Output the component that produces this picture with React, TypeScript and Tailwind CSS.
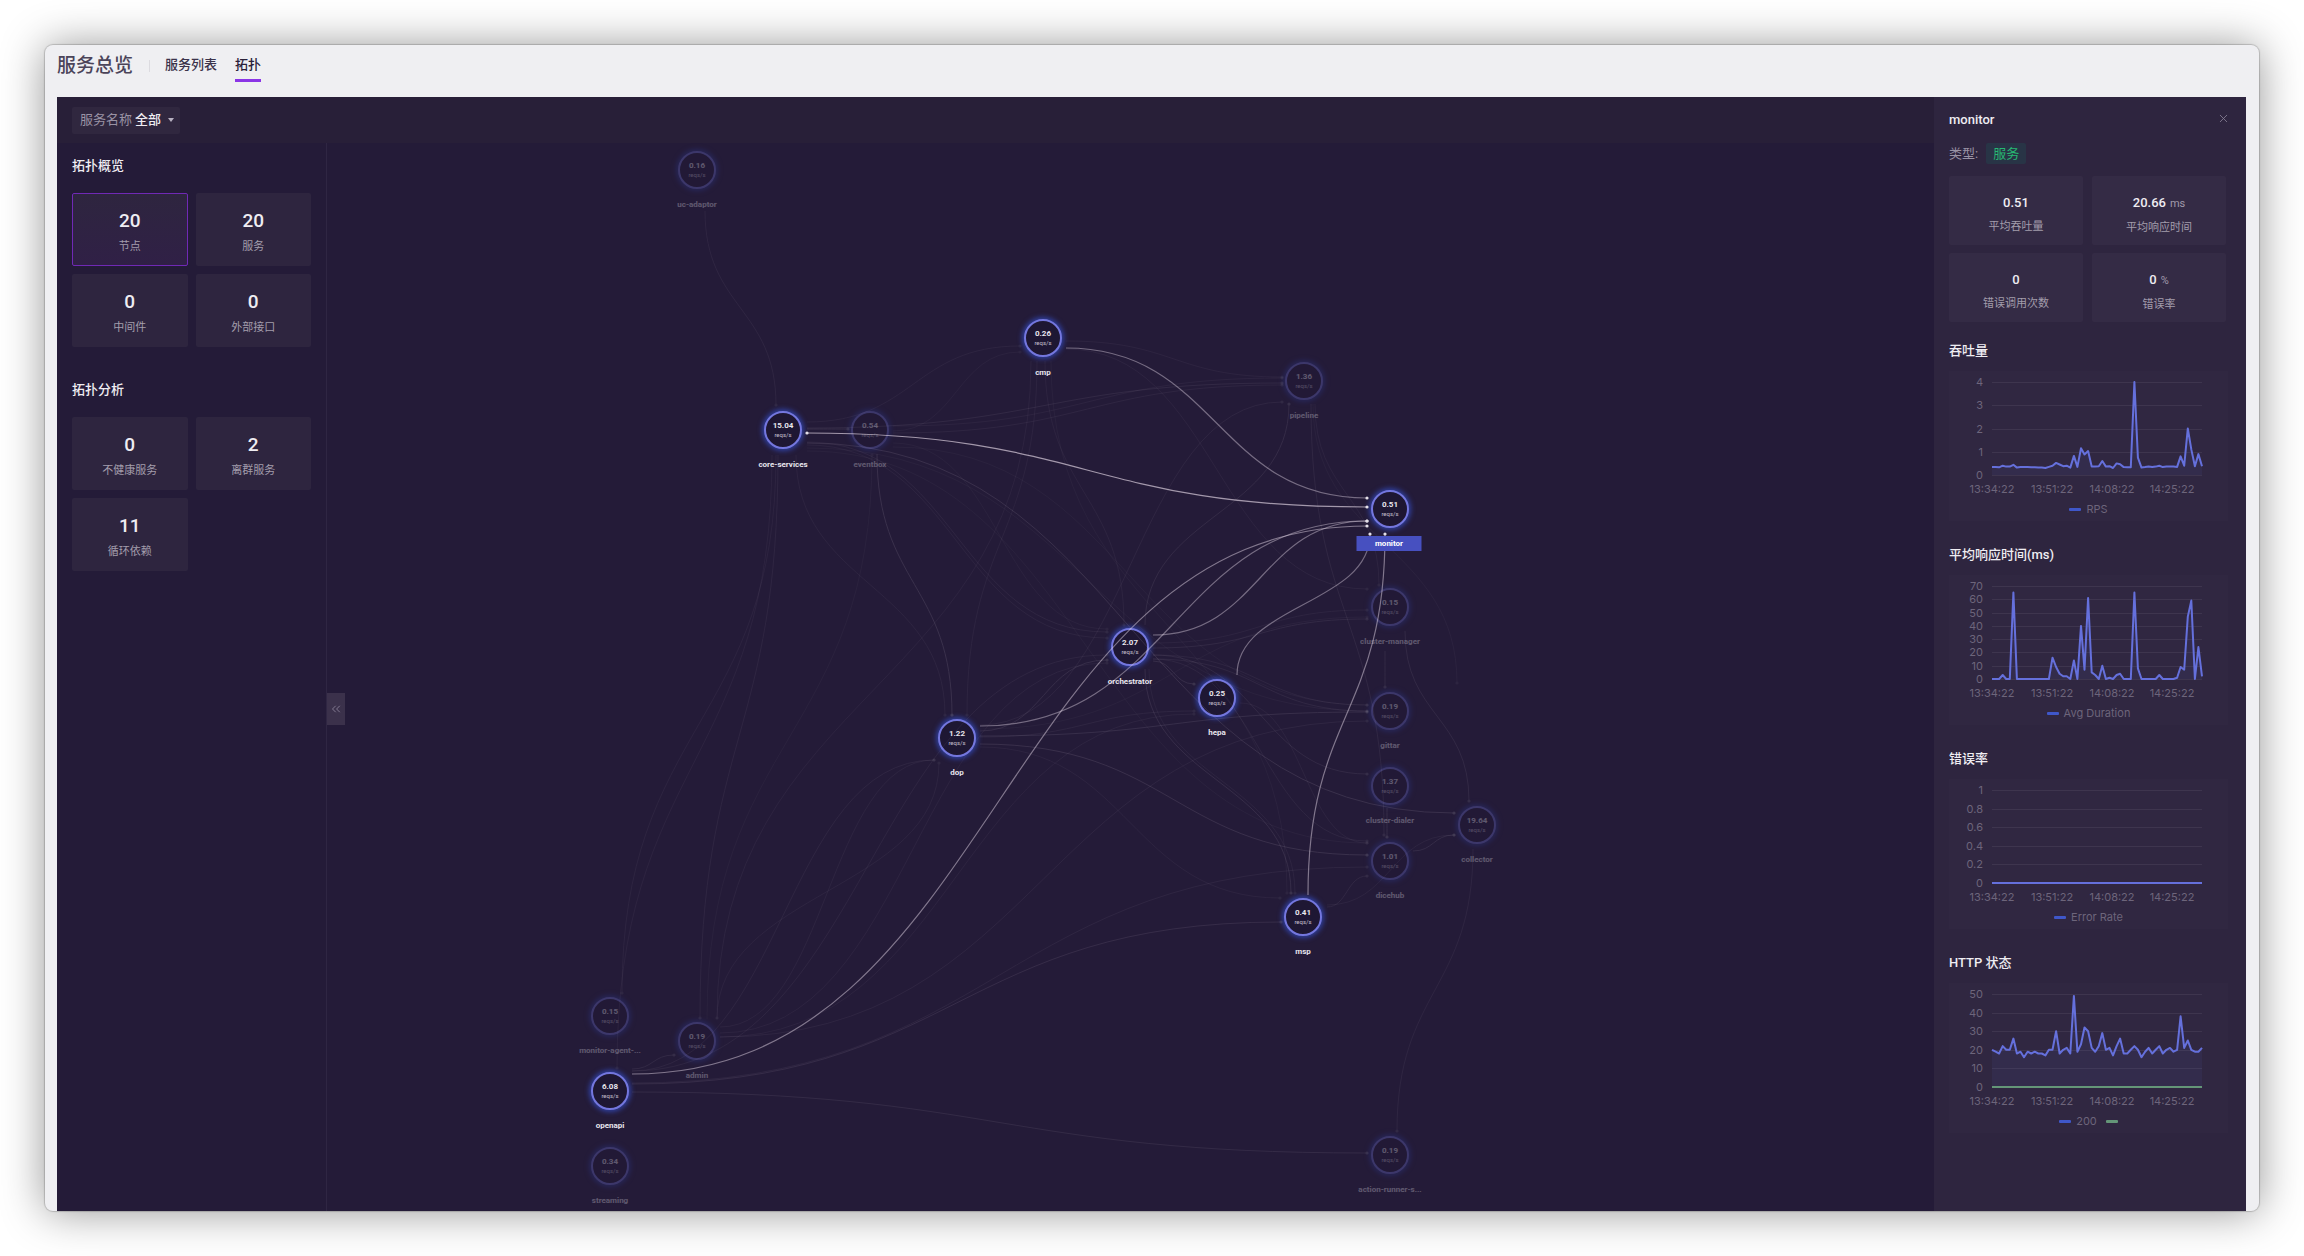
import React from "react";
import { ChevronsLeft, X } from "lucide-react";

type Stat = { value: string; label: string; unit?: string; selected?: boolean };

const overview: Stat[] = [
  { value: "20", label: "节点", selected: true },
  { value: "20", label: "服务" },
  { value: "0", label: "中间件" },
  { value: "0", label: "外部接口" },
];

const analysis: Stat[] = [
  { value: "0", label: "不健康服务" },
  { value: "2", label: "离群服务" },
  { value: "11", label: "循环依赖" },
];

const metrics: Stat[] = [
  { value: "0.51", label: "平均吞吐量" },
  { value: "20.66", unit: "ms", label: "平均响应时间" },
  { value: "0", label: "错误调用次数" },
  { value: "0", unit: "%", label: "错误率" },
];

type ServiceNode = { name: string; rate: string; x: number; y: number; active?: boolean; current?: boolean };

const nodes: ServiceNode[] = [
  { name: "uc-adaptor", rate: "0.16", x: 370, y: 27 },
  { name: "cmp", rate: "0.26", x: 716, y: 195, active: true },
  { name: "pipeline", rate: "1.36", x: 977, y: 238 },
  { name: "core-services", rate: "15.04", x: 456, y: 287, active: true },
  { name: "eventbox", rate: "0.54", x: 543, y: 287 },
  { name: "monitor", rate: "0.51", x: 1063, y: 366, active: true, current: true },
  { name: "cluster-manager", rate: "0.15", x: 1063, y: 464 },
  { name: "orchestrator", rate: "2.07", x: 803, y: 504, active: true },
  { name: "hepa", rate: "0.25", x: 890, y: 555, active: true },
  { name: "gittar", rate: "0.19", x: 1063, y: 568 },
  { name: "dop", rate: "1.22", x: 630, y: 595, active: true },
  { name: "cluster-dialer", rate: "1.37", x: 1063, y: 643 },
  { name: "collector", rate: "19.64", x: 1150, y: 682 },
  { name: "dicehub", rate: "1.01", x: 1063, y: 718 },
  { name: "msp", rate: "0.41", x: 976, y: 774, active: true },
  { name: "monitor-agent-...", rate: "0.15", x: 283, y: 873 },
  { name: "admin", rate: "0.19", x: 370, y: 898 },
  { name: "openapi", rate: "6.08", x: 283, y: 948, active: true },
  { name: "action-runner-s...", rate: "0.19", x: 1063, y: 1012 },
  { name: "streaming", rate: "0.34", x: 283, y: 1023 },
];

// [x1, y1, x2, y2, direction, strength]
type Edge = [number, number, number, number, "h" | "v", number];

const faintEdges: Edge[] = [
  [378, 68, 449, 262, "v", 0.06],
  [480, 286, 521, 286, "h", 0.1],
  [480, 279, 693, 203, "h", 0.05],
  [566, 288, 693, 209, "h", 0.04],
  [480, 285, 955, 240, "h", 0.08],
  [566, 283, 955, 235, "h", 0.05],
  [739, 198, 955, 234, "h", 0.05],
  [566, 290, 955, 242, "h", 0.06],
  [653, 582, 955, 259, "h", 0.06],
  [480, 299, 780, 489, "h", 0.06],
  [480, 302, 780, 495, "h", 0.05],
  [480, 300, 1127, 670, "h", 0.12],
  [566, 300, 780, 486, "h", 0.04],
  [480, 305, 1040, 568, "h", 0.04],
  [480, 308, 1040, 700, "h", 0.04],
  [566, 304, 1040, 562, "h", 0.04],
  [739, 206, 1040, 446, "h", 0.05],
  [550, 311, 625, 572, "v", 0.12],
  [469, 312, 618, 572, "v", 0.05],
  [451, 312, 373, 875, "v", 0.06],
  [449, 312, 295, 850, "v", 0.05],
  [445, 312, 290, 925, "v", 0.05],
  [818, 482, 962, 261, "v", 0.09],
  [710, 218, 640, 572, "v", 0.05],
  [704, 218, 390, 875, "v", 0.05],
  [718, 218, 797, 482, "v", 0.05],
  [724, 218, 960, 750, "v", 0.04],
  [984, 261, 1057, 692, "v", 0.07],
  [988, 261, 1052, 442, "v", 0.05],
  [986, 261, 1130, 540, "v", 0.04],
  [818, 526, 964, 750, "v", 0.1],
  [822, 526, 968, 750, "v", 0.05],
  [826, 500, 1040, 467, "h", 0.05],
  [826, 505, 1040, 476, "h", 0.08],
  [826, 512, 1040, 562, "h", 0.06],
  [826, 516, 1040, 568, "h", 0.07],
  [826, 518, 867, 541, "h", 0.1],
  [826, 512, 1040, 631, "h", 0.08],
  [826, 516, 1040, 698, "h", 0.06],
  [913, 560, 1040, 700, "h", 0.05],
  [653, 588, 780, 517, "h", 0.1],
  [653, 593, 1040, 569, "h", 0.11],
  [653, 586, 1040, 474, "h", 0.04],
  [653, 594, 867, 568, "h", 0.06],
  [653, 601, 1040, 712, "h", 0.12],
  [653, 604, 953, 755, "h", 0.05],
  [305, 941, 954, 779, "h", 0.1],
  [305, 949, 1040, 1010, "h", 0.09],
  [305, 940, 1040, 724, "h", 0.06],
  [305, 928, 607, 617, "h", 0.06],
  [305, 928, 780, 512, "h", 0.06],
  [305, 926, 347, 912, "h", 0.08],
  [393, 884, 607, 617, "h", 0.05],
  [393, 894, 1040, 578, "h", 0.06],
  [393, 890, 780, 520, "h", 0.05],
  [393, 894, 867, 571, "h", 0.05],
  [390, 876, 612, 620, "v", 0.05],
  [380, 876, 545, 312, "v", 0.04],
  [1086, 708, 1127, 692, "h", 0.09],
  [1078, 488, 1142, 658, "v", 0.08],
  [1146, 706, 1070, 988, "v", 0.06],
  [1058, 508, 1058, 544, "v", 0.08],
  [1060, 665, 1060, 694, "v", 0.1],
  [1000, 764, 1040, 733, "h", 0.07],
  [1000, 762, 1127, 692, "h", 0.05],
];

const activeEdges: Edge[] = [
  [480, 290, 1040, 364, "h", 0.65],
  [739, 205, 1040, 355, "h", 0.42],
  [653, 583, 1040, 378, "h", 0.42],
  [305, 931, 1040, 383, "h", 0.48],
  [826, 492, 1040, 378, "h", 0.42],
  [910, 532, 1043, 391, "v", 0.42],
  [981, 752, 1058, 391, "v", 0.48],
];

function edgePath([x1, y1, x2, y2, direction]: Edge) {
  const mx = (x1 + x2) / 2;
  const my = (y1 + y2) / 2;
  return direction === "h"
    ? `M${x1} ${y1}C${mx} ${y1} ${mx} ${y2} ${x2} ${y2}`
    : `M${x1} ${y1}C${x1} ${my} ${x2} ${my} ${x2} ${y2}`;
}

function StatCard({ stat }: { stat: Stat }) {
  return (
    <button
      type="button"
      className={
        stat.selected
          ? "flex h-[73px] flex-col items-center rounded-[2px] border border-[#7029b5] bg-linear-to-b from-[#2e253f] to-[#302046] pt-[13px]"
          : "flex h-[73px] flex-col items-center rounded-[2px] border border-transparent bg-[#2e253f] pt-[13px]"
      }
    >
      <span className="text-[19px] leading-7 font-medium text-[#efedf2]">{stat.value}</span>
      <span className="text-[11px] leading-6 text-[#a39dac]">{stat.label}</span>
    </button>
  );
}

function MetricCard({ stat }: { stat: Stat }) {
  return (
    <div className="flex h-[69px] flex-col items-center rounded-[2px] bg-[#342b45] pt-[15px]">
      <div className="text-[13px] leading-6 font-medium text-[#efedf2]">
        {stat.value}
        {stat.unit && <span className="ml-1 text-[11px] font-normal text-[#a09aab]">{stat.unit}</span>}
      </div>
      <div className="text-[11px] leading-6 text-[#a39dac]">{stat.label}</div>
    </div>
  );
}

function NodeView({ node }: { node: ServiceNode }) {
  return (
    <div
      className={
        node.active
          ? "absolute flex w-24 -translate-x-1/2 flex-col items-center"
          : "absolute flex w-24 -translate-x-1/2 flex-col items-center opacity-30"
      }
      style={{ left: node.x, top: node.y - 19 }}
    >
      <div className="flex size-[38px] flex-col items-center justify-center rounded-full border-2 border-[#7477de] bg-[#1e1733] shadow-[0_0_5px_2px_#3040a0]">
        <span className="text-[8px] leading-[10px] font-bold text-[#e8e6ee]">{node.rate}</span>
        <span className="text-[6px] leading-2 text-[#c5c0d0]">reqs/s</span>
      </div>
      <span className="mt-2 h-[15px] text-[8px] leading-[15px] font-bold whitespace-nowrap text-[#e8e6ee]">
        {node.current ? "" : node.name}
      </span>
    </div>
  );
}

function Topology() {
  return (
    <section aria-label="拓扑" className="relative flex-1 overflow-hidden">
      {nodes.map((node) => (
        <NodeView key={node.name} node={node} />
      ))}
      <svg className="pointer-events-none absolute top-0 left-0" width="1607" height="1068" fill="none" aria-hidden="true">
        {faintEdges.map((edge, i) => (
          <g key={i} opacity={edge[5]}>
            <path d={edgePath(edge)} stroke="#d5c8d8" />
            <circle cx={edge[2]} cy={edge[3]} r="1.6" fill="#ffffff" />
          </g>
        ))}
        {activeEdges.map((edge, i) => (
          <g key={i}>
            <path d={edgePath(edge)} stroke="#e8dcea" strokeOpacity={edge[5]} strokeWidth="1.2" />
            <circle cx={edge[2]} cy={edge[3]} r="1.6" fill="#e4dfe8" />
          </g>
        ))}
        <circle cx="480" cy="290" r="1.6" fill="#e4dfe8" />
      </svg>
      <div className="absolute top-[393px] left-[1062px] flex h-[15px] w-[65px] -translate-x-1/2 items-center justify-center bg-[#4750c0] text-[8px] leading-[15px] font-bold text-white">
        monitor
      </div>
      <button
        type="button"
        aria-label="收起"
        className="absolute top-[550px] left-0 flex h-8 w-[18px] items-center justify-center bg-[#3b314b] text-[#8b829a]"
      >
        <ChevronsLeft size={14} strokeWidth={1.5} />
      </button>
    </section>
  );
}

type Series = { name: string; color: string; legend: string; data: number[] };
type ChartSpec = { title: string; ticks: string[]; max: number; series: Series[] };

const flat = Array.from({ length: 60 }, () => 0);

const charts: ChartSpec[] = [
  {
    title: "吞吐量",
    ticks: ["4", "3", "2", "1", "0"],
    max: 4,
    series: [
      {
        name: "RPS",
        color: "#6570dc",
        legend: "#3f57c9",
        data: [
          0.35, 0.35, 0.33, 0.4, 0.36, 0.36, 0.44, 0.32, 0.34, 0.34, 0.34, 0.33, 0.33, 0.32, 0.32, 0.3, 0.35, 0.4, 0.52, 0.45,
          0.38, 0.4, 0.32, 0.82, 0.35, 1.15, 0.88, 1.03, 0.37, 0.37, 0.38, 0.6, 0.36, 0.38, 0.3, 0.5, 0.46, 0.34, 0.33, 0.33,
          4, 0.75, 0.32, 0.34, 0.37, 0.34, 0.36, 0.4, 0.34, 0.36, 0.36, 0.36, 0.35, 0.8, 0.4, 2, 1.1, 0.38, 0.9, 0.38,
        ],
      },
    ],
  },
  {
    title: "平均响应时间(ms)",
    ticks: ["70", "60", "50", "40", "30", "20", "10", "0"],
    max: 70,
    series: [
      {
        name: "Avg Duration",
        color: "#6570dc",
        legend: "#3f57c9",
        data: [
          0, 0, 0, 3, 0, 0, 65, 0, 0, 0, 0, 0, 0, 0, 0, 0, 0, 16, 9, 4, 2, 2, 0, 14, 0, 40, 7, 61, 5, 3, 0, 10, 0, 1, 0, 3,
          4, 0, 0, 0, 65, 8, 0, 0, 0, 0, 0, 3, 0, 0, 0, 0, 1, 9, 7, 47, 59, 0, 24, 2,
        ],
      },
    ],
  },
  {
    title: "错误率",
    ticks: ["1", "0.8", "0.6", "0.4", "0.2", "0"],
    max: 1,
    series: [{ name: "Error Rate", color: "#6570dc", legend: "#3f57c9", data: flat }],
  },
  {
    title: "HTTP 状态",
    ticks: ["50", "40", "30", "20", "10", "0"],
    max: 50,
    series: [
      {
        name: "200",
        color: "#6570dc",
        legend: "#3f57c9",
        data: [
          20, 19, 18, 22, 20, 20, 26, 18, 19, 16, 19, 18, 19, 18, 18, 17, 20, 20, 30, 18, 20, 21, 18, 49, 19, 23, 32, 30,
          21, 19, 22, 29, 20, 21, 17, 22, 26, 18, 18, 20, 22, 20, 16, 19, 21, 18, 20, 22, 18, 20, 21, 19, 20, 38, 21, 25,
          20, 19, 19, 21,
        ],
      },
      { name: "", color: "#649678", legend: "#649678", data: flat },
    ],
  },
];

const times = ["13:34:22", "13:51:22", "14:08:22", "14:25:22"];

function Chart({ spec }: { spec: ChartSpec }) {
  const left = 43;
  const width = 210;
  const top = 11;
  const bottom = 104;
  const points = (data: number[]) =>
    data
      .map((v, i) => `${(left + (i * width) / 59).toFixed(1)},${(bottom - (v / spec.max) * (bottom - top)).toFixed(1)}`)
      .join(" ");

  return (
    <section className="mb-[22px]">
      <h3 className="mb-2 text-[13px] leading-6 font-medium text-[#efedf2]">{spec.title}</h3>
      <div className="relative h-[150px] w-[279px] bg-[#302741]">
        <svg width="277" height="150" className="font-['Inter',sans-serif] text-[11px]" role="img" aria-label={spec.title}>
          {spec.ticks.map((tick, i) => {
            const y = Math.round(top + (i * (bottom - top)) / (spec.ticks.length - 1));
            return (
              <g key={tick}>
                <line x1={left} x2={left + width} y1={y + 0.5} y2={y + 0.5} stroke="#3e354e" />
                <text x="34" y={y + 4} textAnchor="end" fill="#6d657b">
                  {tick}
                </text>
              </g>
            );
          })}
          {times.map((time, i) => (
            <text key={time} x={left + 60 * i} y="122" textAnchor="middle" fill="#6d657b">
              {time}
            </text>
          ))}
          {spec.series.map((s) => (
            <g key={s.name}>
              <polygon
                points={`${left},${bottom} ${points(s.data)} ${left + width},${bottom}`}
                fill={s.color}
                fillOpacity="0.07"
              />
              <polyline points={points(s.data)} fill="none" stroke={s.color} strokeWidth="2" strokeLinejoin="round" />
            </g>
          ))}
        </svg>
        <div className="absolute inset-x-0 top-[130px] flex justify-center gap-[9px] font-['Inter',sans-serif] text-[11px] leading-4 text-[#6d657b]">
          {spec.series.map((s) => (
            <span key={s.name} className="flex items-center gap-[5px]">
              <svg width="12" height="3" aria-hidden="true">
                <rect width="12" height="3" rx="1" fill={s.legend} />
              </svg>
              {s.name && <span>{s.name}</span>}
            </span>
          ))}
        </div>
      </div>
    </section>
  );
}

export default function App() {
  return (
    <div className="flex min-h-screen bg-white p-[45px] font-['Roboto','Noto_Sans_CJK_SC',sans-serif]">
      <div className="flex flex-1 flex-col overflow-hidden rounded-lg bg-[#efeff2] shadow-[0_0_1px_1px_rgba(0,0,0,0.18),0_1px_44px_rgba(0,0,0,0.42)]">
        <header className="flex h-[52px] items-start pt-[9px] pl-3">
          <h1 className="text-[19px] leading-6 font-medium text-[#4b4459]">服务总览</h1>
          <span className="mt-[6px] ml-4 h-3 w-px bg-[#dcdbe0]" />
          <nav className="-mt-px ml-[15px] flex gap-[18px] text-[13px] leading-6 font-medium">
            <a href="#list" className="border-b-[3px] border-transparent pb-0.5 text-[#3b334b]">
              服务列表
            </a>
            <a href="#topology" className="border-b-[3px] border-[#8b35e6] pb-0.5 text-[#2a2139]">
              拓扑
            </a>
          </nav>
        </header>

        <main className="mr-[13px] ml-3 flex flex-1 bg-[#241b38]">
          <div className="flex min-w-0 flex-1 flex-col">
            <div className="flex h-[46px] items-center bg-[#281f38] pl-[15px]">
              <div className="relative flex h-[27px] items-center gap-[3px] rounded-[2px] bg-[#30273f] px-2 text-[13px] leading-5">
                <label htmlFor="service" className="text-[#9a93a5]">
                  服务名称
                </label>
                <select id="service" className="w-[37px] appearance-none font-medium text-[#efedf2]">
                  <option>全部</option>
                </select>
                <svg width="6" height="4" className="pointer-events-none absolute right-[6px]" fill="#b8b2c2" aria-hidden="true">
                  <path d="M0 0h6L3 4z" />
                </svg>
              </div>
            </div>

            <div className="flex flex-1">
              <aside className="w-[270px] border-r border-[#2f2643] px-[15px] pt-[11px]">
                <h2 className="mb-[15px] text-[13px] leading-6 font-medium text-[#efedf2]">拓扑概览</h2>
                <div className="grid grid-cols-2 gap-2">
                  {overview.map((s) => (
                    <StatCard key={s.label} stat={s} />
                  ))}
                </div>
                <h2 className="mt-[31px] mb-[15px] text-[13px] leading-6 font-medium text-[#efedf2]">拓扑分析</h2>
                <div className="grid grid-cols-2 gap-2">
                  {analysis.map((s) => (
                    <StatCard key={s.label} stat={s} />
                  ))}
                </div>
              </aside>
              <Topology />
            </div>
          </div>

          <aside className="w-[312px] bg-[#2e253f] pt-[11px] pr-5 pl-[15px]">
            <div className="flex items-start justify-between">
              <h2 className="text-[13px] leading-6 font-medium text-[#efedf2]">monitor</h2>
              <button type="button" aria-label="关闭" className="-mr-1 pt-1 text-[#8b8398]">
                <X size={13} strokeWidth={1.5} />
              </button>
            </div>
            <div className="mt-[11px] flex items-center gap-2 text-[13px] leading-[21px]">
              <span className="text-[#9a93a5]">类型:</span>
              <span className="rounded-[2px] bg-[#283446] px-[7px] text-[#27b873]">服务</span>
            </div>
            <div className="mt-3 mb-[17px] grid grid-cols-2 gap-x-[9px] gap-y-2">
              {metrics.map((s) => (
                <MetricCard key={s.label} stat={s} />
              ))}
            </div>
            {charts.map((c) => (
              <Chart key={c.title} spec={c} />
            ))}
          </aside>
        </main>
      </div>
    </div>
  );
}
